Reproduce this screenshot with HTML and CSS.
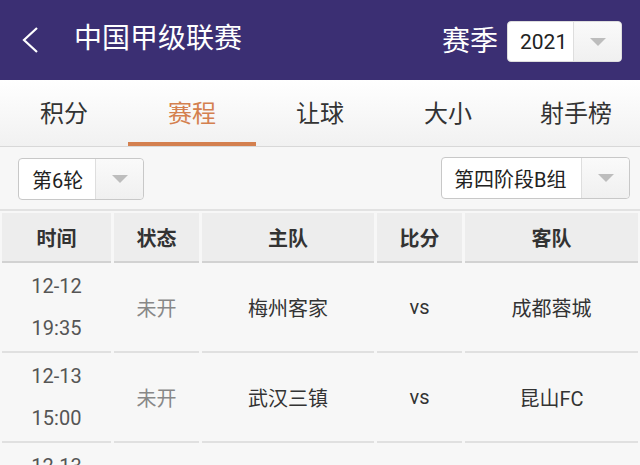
FILE: index.html
```html
<!DOCTYPE html>
<html lang="zh-CN">
<head>
  <meta charset="UTF-8" />
  <meta name="viewport" content="width=device-width, initial-scale=1.0"/>
  <title>中国甲级联赛 - 赛程</title>
  <link rel="stylesheet" href="styles.css">
</head>
<body>
  <div class="topbar">
    <svg class="back" width="20" height="28" viewBox="0 0 20 28">
      <polyline points="16,2 3,14 16,26" fill="none" stroke="#fff" stroke-width="2.2" />
    </svg>
    <div class="title">中国甲级联赛</div>
    <div class="season">
      <span>赛季</span>
      <div class="select select-season">
        <span class="select-text">2021</span>
        <span class="select-arrow"><i></i></span>
      </div>
    </div>
  </div>

  <div class="tabs">
    <div class="tab">积分</div>
    <div class="tab active">赛程</div>
    <div class="tab">让球</div>
    <div class="tab">大小</div>
    <div class="tab">射手榜</div>
  </div>

  <div class="filters">
    <div class="select select-round">
      <span class="select-text">第6轮</span>
      <span class="select-arrow"><i></i></span>
    </div>
    <div class="select select-group">
      <span class="select-text">第四阶段B组</span>
      <span class="select-arrow"><i></i></span>
    </div>
  </div>

  <table class="schedule">
    <colgroup>
      <col class="c-time" />
      <col class="c-state" />
      <col class="c-home" />
      <col class="c-score" />
      <col class="c-away" />
    </colgroup>
    <thead>
      <tr>
        <th>时间</th>
        <th>状态</th>
        <th>主队</th>
        <th>比分</th>
        <th>客队</th>
      </tr>
    </thead>
    <tbody>
      <tr>
        <td class="time">12-12<br>19:35</td>
        <td class="state">未开</td>
        <td>梅州客家</td>
        <td>vs</td>
        <td>成都蓉城</td>
      </tr>
      <tr>
        <td class="time">12-13<br>15:00</td>
        <td class="state">未开</td>
        <td>武汉三镇</td>
        <td>vs</td>
        <td>昆山FC</td>
      </tr>
      <tr>
        <td class="time">12-13<br>19:35</td>
        <td class="state">未开</td>
        <td>北京北体大</td>
        <td>vs</td>
        <td>浙江队</td>
      </tr>
    </tbody>
  </table>
</body>
</html>
```

FILE: styles.css
```css
body {
  margin: 0;
  font-family: Roboto, "Noto Sans CJK SC", "Noto Sans", sans-serif;
  background: #f7f7f7;
  color: #333;
  overflow: hidden;
}
.topbar {
  height: 80px;
  background: #3b2f73;
  color: #fff;
  display: flex;
  align-items: center;
  padding: 0 18px 0 21px;
  box-sizing: border-box;
}
.back {
  display: block;
}
.title {
  margin-left: 33px;
  font-size: 28px;
  line-height: 1;
  margin-top: -2px;
}
.season {
  margin-left: auto;
  display: flex;
  align-items: center;
  font-size: 28px;
  margin-top: 3px;
}
.season > span {
  margin-right: 9px;
  margin-top: -5px;
}
.select {
  display: flex;
  align-items: stretch;
  background: #fff;
  border: 1px solid #c8c8c8;
  border-radius: 4px;
  box-sizing: border-box;
  color: #222;
}
.select-text {
  display: flex;
  align-items: center;
  padding-left: 12px;
  border-right: 1px solid #dedede;
}
.select-arrow {
  flex: 1;
  display: flex;
  align-items: center;
  justify-content: center;
  background: linear-gradient(#fafafa, #f0f0f0);
  border-radius: 0 4px 4px 0;
}
.select-arrow i {
  width: 0;
  height: 0;
  border-left: 8px solid transparent;
  border-right: 8px solid transparent;
  border-top: 8px solid #bdbdbd;
}
.select-season {
  width: 115px;
  height: 41px;
  font-size: 21px;
  border-color: #ddd;
}
.select-season .select-text {
  width: 66px;
  padding-left: 12px;
  box-sizing: border-box;
}
.tabs {
  display: flex;
  height: 67px;
  background: linear-gradient(#ffffff, #f1f1f1);
  border-bottom: 1px solid #d8d8d8;
  box-sizing: border-box;
}
.tab {
  flex: 1;
  display: flex;
  align-items: center;
  justify-content: center;
  font-size: 24px;
  color: #333;
  border-bottom: 4px solid transparent;
}
.tab.active {
  color: #d4804f;
  border-bottom-color: #d4804f;
}
.filters {
  display: flex;
  justify-content: space-between;
  align-items: flex-start;
  height: 64px;
  padding: 10px 10px 0 18px;
  box-sizing: border-box;
  border-bottom: 2px solid #e2e2e2;
}
.filters .select {
  height: 42px;
  font-size: 20px;
}
.select-round {
  width: 126px;
  margin-top: 1px;
}
.select-round .select-text {
  width: 77px;
  padding-left: 13px;
  box-sizing: border-box;
}
.select-group {
  width: 189px;
}
.select-group .select-text {
  width: 140px;
  padding-left: 12px;
  box-sizing: border-box;
}
.schedule {
  width: calc(100% + 2px);
  margin: 2px -1px 0;
  border-collapse: separate;
  border-spacing: 3px 0;
  table-layout: fixed;
}
.c-time { width: 109px; }
.c-state { width: 85px; }
.c-home { width: 172px; }
.c-score { width: 85px; }
.c-away { width: 173px; }
.schedule th {
  height: 48px;
  background: #ededed;
  border-bottom: 2px solid #d2d2d2;
  font-size: 20px;
  font-weight: bold;
  color: #333;
  padding: 0;
}
.schedule td {
  height: 88px;
  border-bottom: 2px solid #e0e0e0;
  text-align: center;
  font-size: 20px;
  color: #333;
  padding: 0;
}
.schedule td.time {
  line-height: 42px;
  color: #555;
}
.schedule td.state {
  color: #888;
}
```
